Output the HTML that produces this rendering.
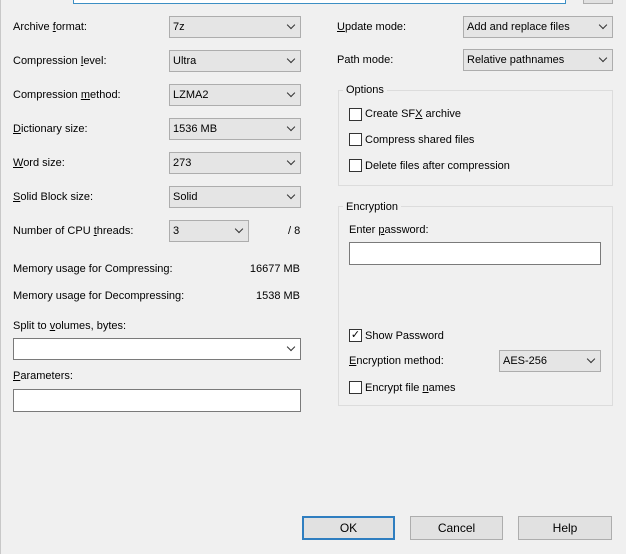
<!DOCTYPE html><html><head><style>
body{margin:0;width:626px;height:554px;background:#f0f0f0;font-family:"Liberation Sans",sans-serif;font-size:11px;color:#000;position:relative;overflow:hidden}
div{position:absolute;box-sizing:border-box}
.l{white-space:nowrap;line-height:14px}
.c{background:#e5e5e5;border:1px solid #adadad;height:22px;padding:3px 0 0 3px;line-height:14px}
.c:after{content:"";position:absolute;right:6px;top:5px;width:5px;height:5px;border-right:1px solid #333;border-bottom:1px solid #333;transform:rotate(45deg)}
.cw{background:#fff}
.i{background:#fff;border:1px solid #7a7a7a}
.g{border:1px solid #dcdcdc}
.gt{background:#f0f0f0;padding:0 3px;line-height:14px}
.cb{width:13px;height:13px;border:1px solid #333;background:#fff}
.b{background:#e1e1e1;border:1px solid #adadad;height:24px;text-align:center;line-height:22px;font-size:12px}
</style></head><body>
<div style="left:73px;top:-20px;width:493px;height:24px;border:1px solid #3c8fc4;background:#fff"></div>
<div style="left:583px;top:-20px;width:30px;height:24px;border:1px solid #adadad;background:#e1e1e1"></div>
<div style="left:0;top:0;width:1px;height:554px;background:#c8c8c8"></div>

<div class="l" style="left:13px;top:20px">Archive <u>f</u>ormat:</div>
<div class="c" style="left:169px;top:16px;width:132px">7z</div>
<div class="l" style="left:13px;top:54px">Compression <u>l</u>evel:</div>
<div class="c" style="left:169px;top:50px;width:132px">Ultra</div>
<div class="l" style="left:13px;top:88px">Compression <u>m</u>ethod:</div>
<div class="c" style="left:169px;top:84px;width:132px">LZMA2</div>
<div class="l" style="left:13px;top:122px"><u>D</u>ictionary size:</div>
<div class="c" style="left:169px;top:118px;width:132px">1536 MB</div>
<div class="l" style="left:13px;top:156px"><u>W</u>ord size:</div>
<div class="c" style="left:169px;top:152px;width:132px">273</div>
<div class="l" style="left:13px;top:190px"><u>S</u>olid Block size:</div>
<div class="c" style="left:169px;top:186px;width:132px">Solid</div>
<div class="l" style="left:13px;top:224px">Number of CPU <u>t</u>hreads:</div>
<div class="c" style="left:169px;top:220px;width:80px">3</div>
<div class="l" style="left:288px;top:224px">/ 8</div>
<div class="l" style="left:13px;top:262px">Memory usage for Compressing:</div>
<div class="l" style="left:200px;width:100px;text-align:right;top:262px">16677 MB</div>
<div class="l" style="left:13px;top:289px">Memory usage for Decompressing:</div>
<div class="l" style="left:200px;width:100px;text-align:right;top:289px">1538 MB</div>
<div class="l" style="left:13px;top:319px">Split to <u>v</u>olumes, bytes:</div>
<div class="c cw" style="left:13px;top:338px;width:288px;border-color:#7a7a7a"></div>
<div class="l" style="left:13px;top:369px"><u>P</u>arameters:</div>
<div class="i" style="left:13px;top:389px;width:288px;height:23px"></div>

<div class="l" style="left:337px;top:20px"><u>U</u>pdate mode:</div>
<div class="c" style="left:463px;top:16px;width:150px">Add and replace files</div>
<div class="l" style="left:337px;top:53px">Path mode:</div>
<div class="c" style="left:463px;top:49px;width:150px">Relative pathnames</div>

<div class="g" style="left:338px;top:90px;width:275px;height:96px"></div>
<div class="gt" style="left:343px;top:83px">Options</div>
<div class="cb" style="left:349px;top:108px"></div><div class="l" style="left:365px;top:107px">Create SF<u>X</u> archive</div>
<div class="cb" style="left:349px;top:133px"></div><div class="l" style="left:365px;top:133px">Compress shared files</div>
<div class="cb" style="left:349px;top:159px"></div><div class="l" style="left:365px;top:159px">Delete files after compression</div>

<div class="g" style="left:338px;top:206px;width:275px;height:200px"></div>
<div class="gt" style="left:343px;top:200px">Encryption</div>
<div class="l" style="left:349px;top:223px">Enter <u>p</u>assword:</div>
<div class="i" style="left:349px;top:242px;width:252px;height:23px"></div>
<div class="cb" style="left:349px;top:329px;font-size:11px;line-height:11px;text-align:center">✓</div>
<div class="l" style="left:365px;top:329px">Show Password</div>
<div class="l" style="left:349px;top:354px"><u>E</u>ncryption method:</div>
<div class="c" style="left:499px;top:350px;width:102px">AES-256</div>
<div class="cb" style="left:349px;top:381px"></div><div class="l" style="left:365px;top:381px">Encrypt file <u>n</u>ames</div>

<div class="b" style="left:302px;top:516px;width:93px;border:2px solid #2f7ec0;line-height:20px">OK</div>
<div class="b" style="left:410px;top:516px;width:93px">Cancel</div>
<div class="b" style="left:518px;top:516px;width:94px">Help</div>
</body></html>
